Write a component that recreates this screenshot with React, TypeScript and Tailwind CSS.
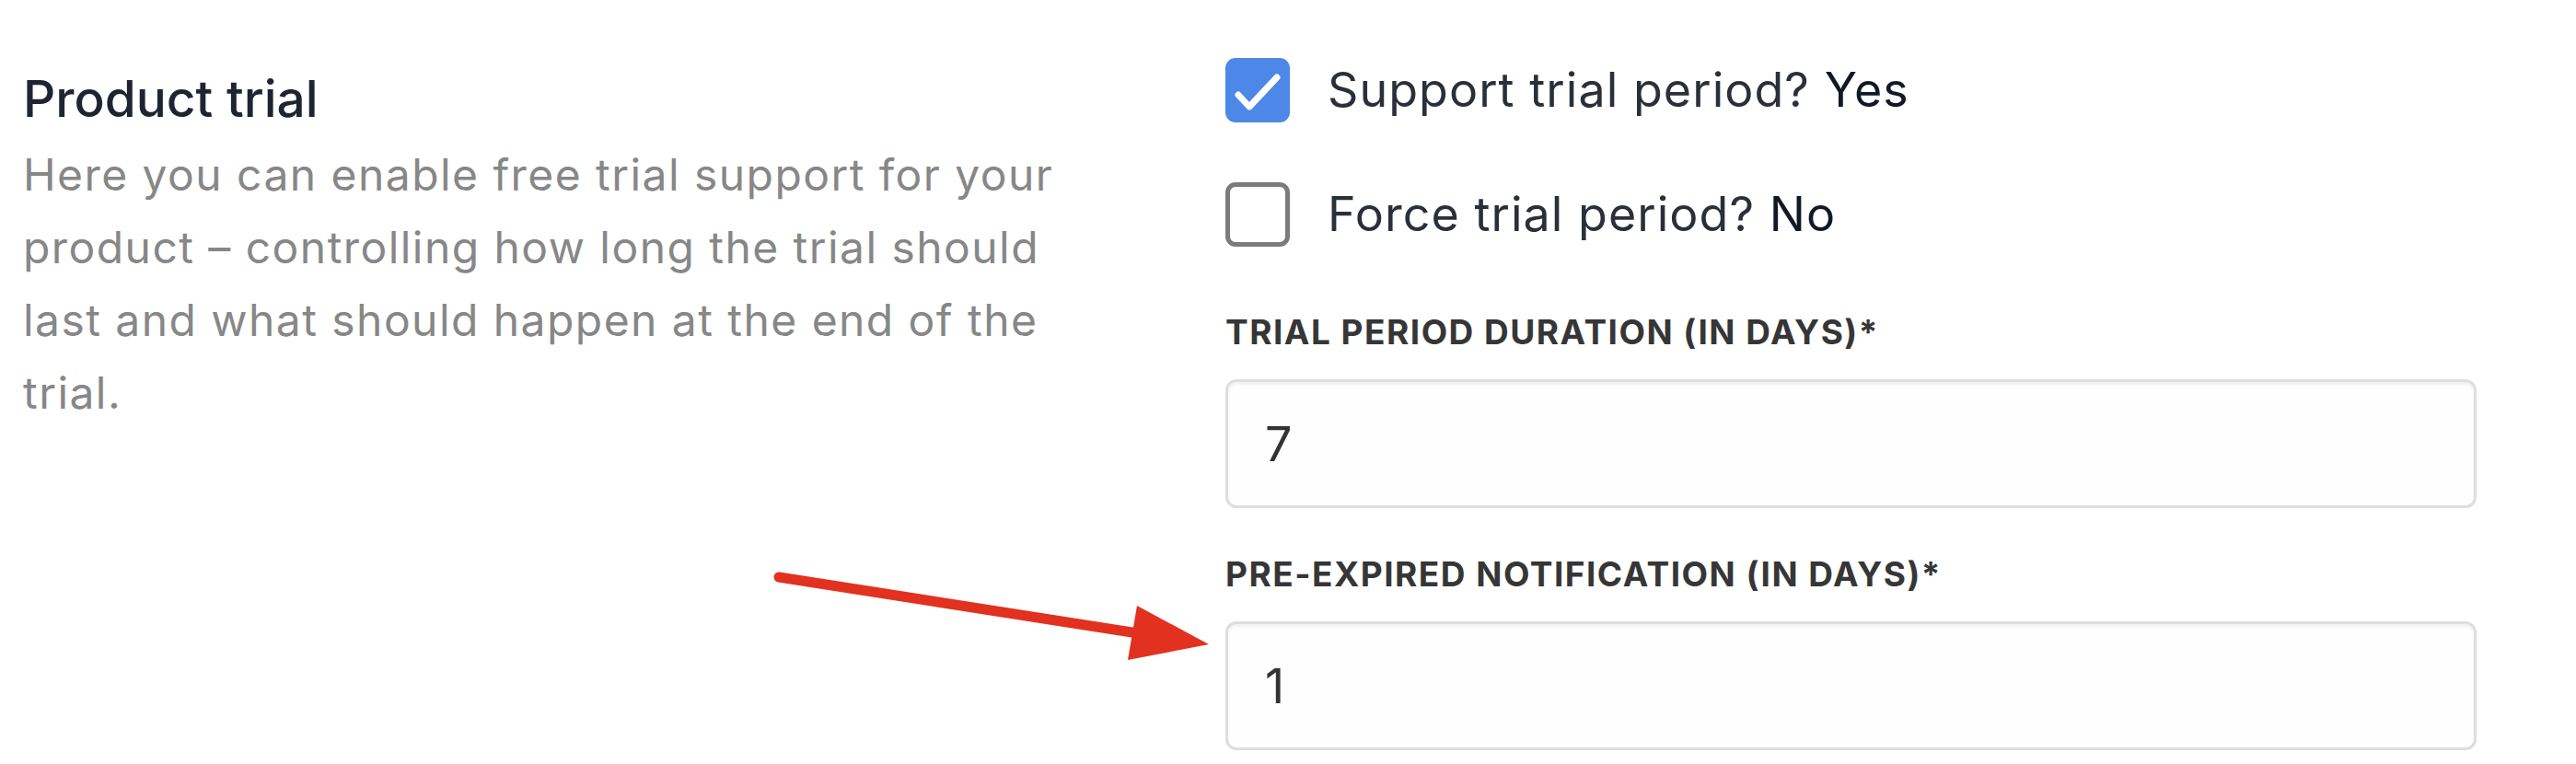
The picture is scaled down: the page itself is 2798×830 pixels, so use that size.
import React, { useState } from 'react';

const CheckMark: React.FC = () => (
  <svg viewBox="0 0 70 70" className="w-[70px] h-[70px]">
    <path d="M14 40 L26 53 L56 21" fill="none" stroke="#ffffff" strokeWidth="7" strokeLinecap="round" strokeLinejoin="round" />
  </svg>
);

type ToggleProps = {
  label: string;
  checked: boolean;
  onToggle: () => void;
};

const ToggleRow: React.FC<ToggleProps> = ({ label, checked, onToggle }) => (
  <button type="button" onClick={onToggle} className="flex items-center gap-[41px] h-[70px] text-left">
    {checked ? (
      <span className="w-[70px] h-[70px] rounded-[11px] bg-[#4d87e7] flex items-center justify-center shrink-0">
        <CheckMark />
      </span>
    ) : (
      <span className="w-[70px] h-[70px] rounded-[11px] border-[5px] border-[#7b7b7b] bg-white shrink-0" />
    )}
    <span className="text-[52px] leading-[70px] tracking-[0.02em] text-[#2a303a]">
      {label} <span className="text-[#111827]">{checked ? 'Yes' : 'No'}</span>
    </span>
  </button>
);

type FieldProps = {
  label: string;
  value: string;
  onChange: (v: string) => void;
  className?: string;
};

const NumberField: React.FC<FieldProps> = ({ label, value, onChange, className }) => (
  <div className={className}>
    <label className="block text-[37px] leading-[44px] font-bold uppercase tracking-[0.04em] text-[#363636] mb-[29px]">
      {label}
    </label>
    <input
      type="text"
      value={value}
      onChange={(e) => onChange(e.target.value)}
      className="w-full h-[140px] px-[40px] rounded-[12px] border-[3px] border-[#dedede] bg-[#fefefe] shadow-[inset_0_3px_3px_rgba(0,0,0,0.05)] text-[52px] text-[#333333] focus:outline-none"
    />
  </div>
);

const App: React.FC = () => {
  const [supportTrial, setSupportTrial] = useState(true);
  const [forceTrial, setForceTrial] = useState(false);
  const [duration, setDuration] = useState('7');
  const [notifyDays, setNotifyDays] = useState('1');

  return (
    <div className="relative w-full h-[830px] bg-white overflow-hidden font-['Inter','Noto_Sans',sans-serif]">
      <div className="flex pl-[25px]">
        {/* Section intro */}
        <div className="w-[1306px] shrink-0 pt-[74px] pr-[156px]">
          <h2 className="text-[55px] leading-[66px] font-medium text-[#1d2532]">Product trial</h2>
          <p className="mt-[10px] text-[48px] leading-[79px] tracking-[0.03em] text-[#878787]">
            Here you can enable free trial support for your product – controlling how long the trial should last and what should happen at the end of the trial.
          </p>
        </div>

        {/* Trial settings */}
        <div className="w-[1359px] shrink-0 pt-[63px]">
          <div className="flex flex-col gap-[65px]">
            <ToggleRow label="Support trial period?" checked={supportTrial} onToggle={() => setSupportTrial(!supportTrial)} />
            <ToggleRow label="Force trial period?" checked={forceTrial} onToggle={() => setForceTrial(!forceTrial)} />
          </div>
          <NumberField className="mt-[71px]" label="Trial period duration (in days)*" value={duration} onChange={setDuration} />
          <NumberField className="mt-[50px]" label="Pre-expired notification (in days)*" value={notifyDays} onChange={setNotifyDays} />
        </div>
      </div>

      {/* Callout arrow */}
      <svg className="absolute inset-0 w-full h-full pointer-events-none" viewBox="0 0 2798 830">
        <line x1="846" y1="627" x2="1236" y2="688" stroke="#e2311f" strokeWidth="11" strokeLinecap="round" />
        <polygon points="1235,658 1313,700 1225,717" fill="#e2311f" />
      </svg>
    </div>
  );
};

export default App;
